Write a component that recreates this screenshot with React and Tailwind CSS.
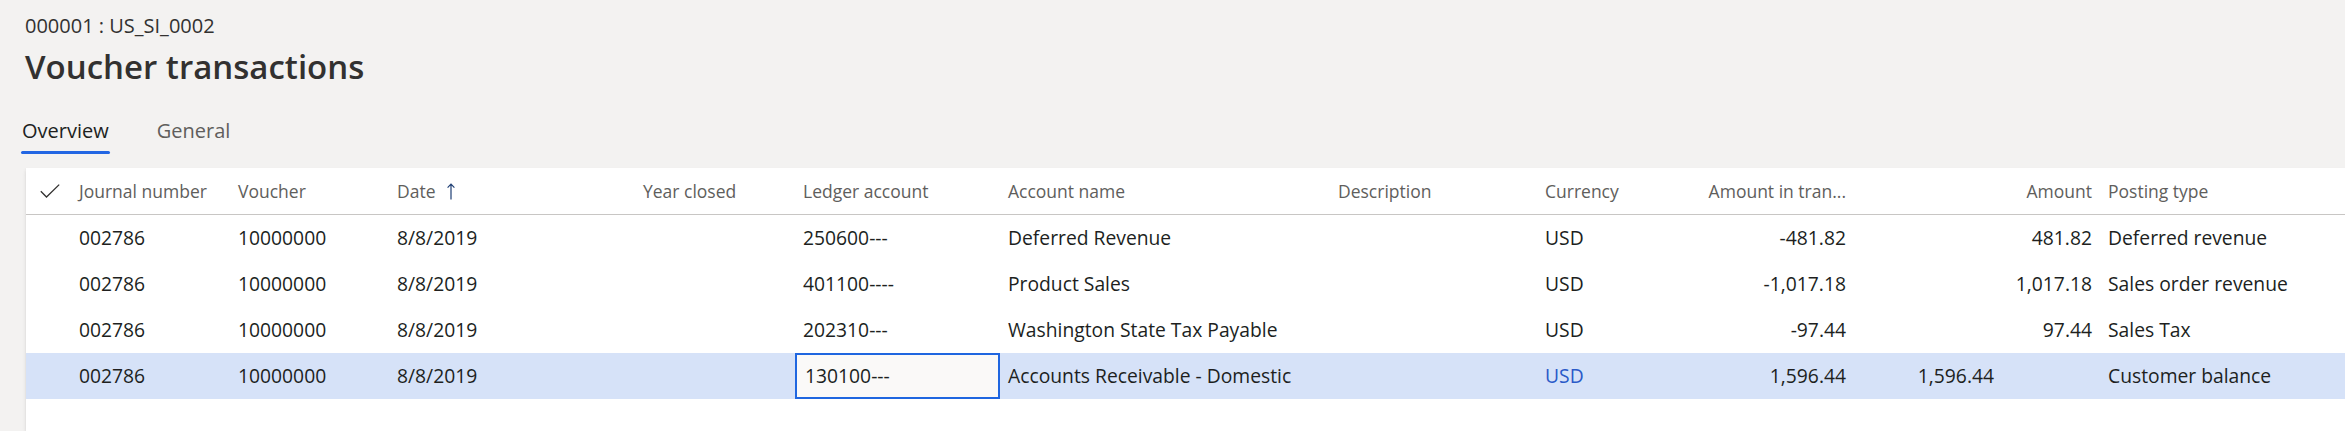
import React from "react";

const columns = [
  { key: "journal", label: "Journal number" },
  { key: "voucher", label: "Voucher" },
  { key: "date", label: "Date", sorted: true },
  { key: "yearClosed", label: "Year closed" },
  { key: "ledger", label: "Ledger account" },
  { key: "accountName", label: "Account name" },
  { key: "description", label: "Description" },
  { key: "currency", label: "Currency" },
  { key: "amountCur", label: "Amount in tran...", right: true },
  { key: "debit", label: "", right: true },
  { key: "amount", label: "Amount", right: true },
  { key: "postingType", label: "Posting type" },
];

const rows = [
  {
    journal: "002786",
    voucher: "10000000",
    date: "8/8/2019",
    yearClosed: "",
    ledger: "250600---",
    accountName: "Deferred Revenue",
    description: "",
    currency: "USD",
    amountCur: "-481.82",
    debit: "",
    amount: "481.82",
    postingType: "Deferred revenue",
  },
  {
    journal: "002786",
    voucher: "10000000",
    date: "8/8/2019",
    yearClosed: "",
    ledger: "401100----",
    accountName: "Product Sales",
    description: "",
    currency: "USD",
    amountCur: "-1,017.18",
    debit: "",
    amount: "1,017.18",
    postingType: "Sales order revenue",
  },
  {
    journal: "002786",
    voucher: "10000000",
    date: "8/8/2019",
    yearClosed: "",
    ledger: "202310---",
    accountName: "Washington State Tax Payable",
    description: "",
    currency: "USD",
    amountCur: "-97.44",
    debit: "",
    amount: "97.44",
    postingType: "Sales Tax",
  },
  {
    journal: "002786",
    voucher: "10000000",
    date: "8/8/2019",
    yearClosed: "",
    ledger: "130100---",
    accountName: "Accounts Receivable - Domestic",
    description: "",
    currency: "USD",
    amountCur: "1,596.44",
    debit: "1,596.44",
    amount: "",
    postingType: "Customer balance",
    selected: true,
  },
];

const gridCols =
  "grid grid-cols-[45px_159px_159px_246px_160px_205px_330px_207px_160px_157px_148px_98px_1fr]";

function CheckIcon() {
  return (
    <svg width="20" height="14" viewBox="0 0 20 14" fill="none">
      <polyline
        points="0.8,7.2 6.5,13 19.2,0.6"
        stroke="#323130"
        strokeWidth="1.3"
        fill="none"
      />
    </svg>
  );
}

function SortUpIcon() {
  return (
    <svg width="8" height="17" viewBox="0 0 8 17" fill="none">
      <path d="M4 1.2V16.5M0.6 4.6L4 1.2L7.4 4.6" stroke="#1f3f74" strokeWidth="1.2" />
    </svg>
  );
}

export default function App() {
  return (
    <div className="h-screen w-full overflow-hidden bg-[#f3f2f1] font-['Open_Sans',sans-serif] text-[#201f1e]">
      <div className="pl-[25px] pt-[12px]">
        <div className="text-[20px] leading-[28px] text-[#323130]">000001 : US_SI_0002</div>
        <h1 className="mt-[3px] text-[33px] leading-[48px] font-semibold text-[#323130]">
          Voucher transactions
        </h1>
      </div>

      {/* Tabs */}
      <div className="mt-[26px] flex gap-[48px] pl-[22px]">
        <div className="flex flex-col">
          <span className="text-[20px] leading-[28px] text-[#201f1e]">Overview</span>
          <div className="-mx-px mt-[6px] h-[3px] rounded-full bg-[#2266e3]" />
        </div>
        <span className="text-[20px] leading-[28px] text-[#605e5c]">General</span>
      </div>

      {/* Grid card */}
      <div className="ml-[26px] mt-[14px] h-[263px] bg-white shadow-[0_1.6px_3.6px_rgba(0,0,0,0.13),0_0.3px_0.9px_rgba(0,0,0,0.11)]">
        <div className={`${gridCols} h-[47px] border-b border-[#c8c6c4] text-[17.5px] font-medium text-[#605e5c]`}>
          <div className="flex items-center justify-center pl-[2px]">
            <CheckIcon />
          </div>
          {columns.map((col) => (
            <div
              key={col.key}
              className={`flex items-center overflow-hidden whitespace-nowrap px-[8px] ${
                col.right ? "justify-end" : ""
              }`}
            >
              <span>{col.label}</span>
              {col.sorted && (
                <span className="ml-[11px] flex items-center">
                  <SortUpIcon />
                </span>
              )}
            </div>
          ))}
        </div>

        {rows.map((row, i) => (
          <div
            key={i}
            className={`${gridCols} h-[46px] text-[19.3px] ${row.selected ? "bg-[#d6e2f8]" : ""}`}
          >
            <div />
            {columns.map((col) => {
              const focused = row.selected && col.key === "ledger";
              const isLink = row.selected && col.key === "currency";
              return (
                <div
                  key={col.key}
                  className={`flex items-center overflow-hidden whitespace-nowrap ${
                    col.right ? "justify-end" : ""
                  } ${
                    focused
                      ? "border-2 border-[#1f66e0] bg-[#faf9f8] px-[8px]"
                      : "px-[8px]"
                  } ${isLink ? "text-[#2a5ac8]" : ""}`}
                >
                  {row[col.key]}
                </div>
              );
            })}
          </div>
        ))}
      </div>
    </div>
  );
}
